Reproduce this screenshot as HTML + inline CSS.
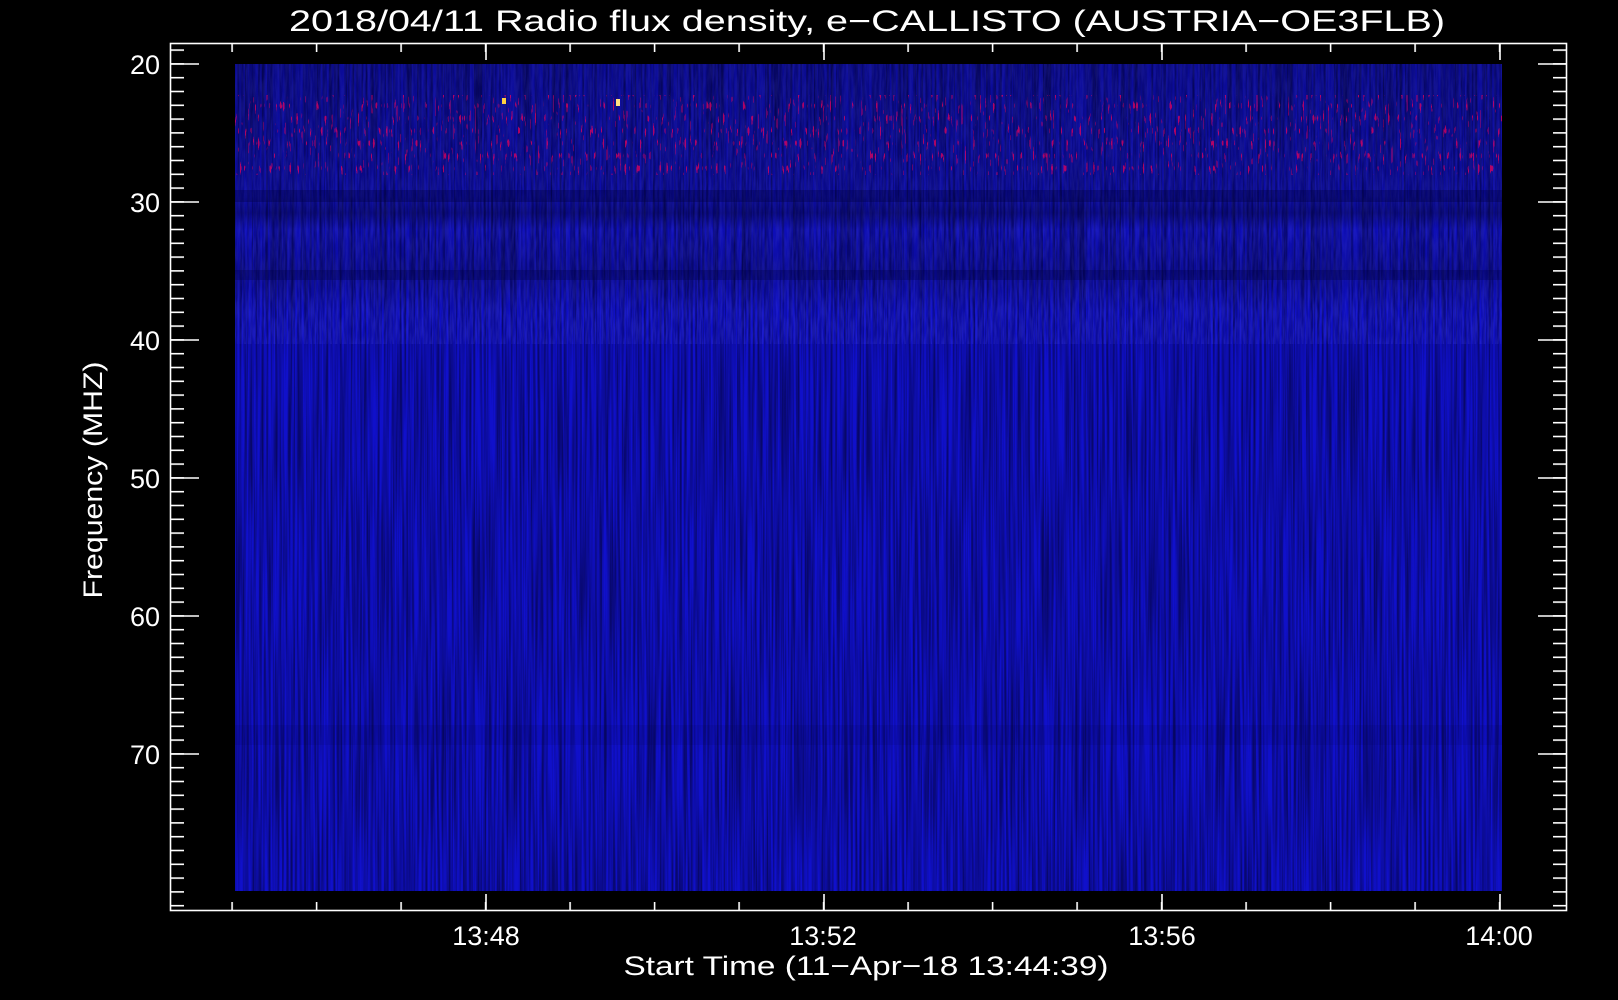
<!DOCTYPE html>
<html><head><meta charset="utf-8"><style>
html,body{margin:0;padding:0;background:#000;width:1618px;height:1000px;overflow:hidden}
svg{display:block}
text{font-family:"Liberation Sans",sans-serif;fill:#fff}
</style></head><body>
<svg width="1618" height="1000" viewBox="0 0 1618 1000" xmlns="http://www.w3.org/2000/svg">
<defs>
<filter id="noise" x="0" y="0" width="100%" height="100%">
<feTurbulence type="fractalNoise" baseFrequency="0.45 0.006" numOctaves="2" seed="3"/>
<feColorMatrix type="matrix" values="0 0 0 0 0  0 0 0 0 0  0 0 0 0 0  0 0 0 -2.2 1.5"/>
</filter>
<filter id="noise2" x="0" y="0" width="100%" height="100%">
<feTurbulence type="fractalNoise" baseFrequency="0.5 0.05" numOctaves="2" seed="7"/>
<feColorMatrix type="matrix" values="0 0 0 0 0.1  0 0 0 0 0.1  0 0 0 0 1  0 0 0 -3 2.0"/>
</filter>
<filter id="red" x="0" y="0" width="100%" height="100%">
<feTurbulence type="fractalNoise" baseFrequency="0.6 0.08" numOctaves="1" seed="11"/>
<feColorMatrix type="matrix" values="0 0 0 0 0.9  0 0 0 0 0  0 0 0 0 0.1  0 0 0 -30 10.2"/>
</filter>
<linearGradient id="bands" x1="0" y1="0" x2="0" y2="1">
<stop offset="0" stop-color="#000030" stop-opacity="0.4"/>
<stop offset="0.16" stop-color="#000030" stop-opacity="0.3"/>
<stop offset="0.18" stop-color="#000030" stop-opacity="0.5"/>
<stop offset="0.2" stop-color="#000030" stop-opacity="0.2"/>
<stop offset="0.25" stop-color="#000030" stop-opacity="0.35"/>
<stop offset="0.3" stop-color="#000030" stop-opacity="0.1"/>
<stop offset="1" stop-color="#000030" stop-opacity="0.1"/>
</linearGradient>
<pattern id="ymin" x="0" y="49.3" width="20" height="13.8" patternUnits="userSpaceOnUse"><rect x="0" y="0" width="20" height="1.6" fill="#fff"/></pattern>
<pattern id="xmin" x="231.3" y="0" width="84.5" height="20" patternUnits="userSpaceOnUse"><rect x="0" y="0" width="1.6" height="20" fill="#fff"/></pattern>
</defs>

<text x="867" y="31" font-size="30" text-anchor="middle" textLength="1156" lengthAdjust="spacingAndGlyphs">2018/04/11  Radio flux density, e−CALLISTO (AUSTRIA−OE3FLB)</text>

<rect x="235" y="64" width="1267" height="827" fill="#1212dc"/>
<rect x="235" y="64" width="1267" height="827" filter="url(#noise)" opacity="0.5"/>
<rect x="235" y="64" width="1267" height="280" filter="url(#noise2)" opacity="0.2"/>
<rect x="235" y="64" width="1267" height="827" fill="url(#bands)"/>
<rect x="235" y="190" width="1267" height="12" fill="#000040" opacity="0.35"/>
<rect x="235" y="270" width="1267" height="10" fill="#000040" opacity="0.3"/>
<rect x="235" y="725" width="1267" height="20" fill="#000040" opacity="0.1"/>
<rect x="235" y="95" width="1267" height="80" filter="url(#red)" opacity="0.7"/>
<rect x="502" y="98" width="4" height="6" fill="#ffd040"/>
<rect x="616" y="99" width="4" height="7" fill="#ffe080"/>

<rect x="170.5" y="43.5" width="1396" height="867" fill="none" stroke="#fff" stroke-width="1.6"/>
<rect x="170" y="49" width="14" height="862" fill="url(#ymin)"/>
<rect x="1553" y="49" width="14" height="862" fill="url(#ymin)"/>
<rect x="231" y="43" width="1272" height="9" fill="url(#xmin)"/>
<rect x="231" y="902" width="1272" height="9" fill="url(#xmin)"/>
<g stroke="#fff" stroke-width="1.6">
<path d="M170 64h29M170 202h29M170 340h29M170 478h29M170 616h29M170 754h29"/>
<path d="M1567 64h-29M1567 202h-29M1567 340h-29M1567 478h-29M1567 616h-29M1567 754h-29"/>
<path d="M486 911v-17M824 911v-17M1162 911v-17M1500 911v-17"/>
<path d="M486 43v17M824 43v17M1162 43v17M1500 43v17"/>
</g>

<g font-size="27" text-anchor="end">
<text x="160" y="74">20</text>
<text x="160" y="212">30</text>
<text x="160" y="350">40</text>
<text x="160" y="488">50</text>
<text x="160" y="626">60</text>
<text x="160" y="764">70</text>
</g>
<g font-size="27" text-anchor="middle">
<text x="486" y="945">13:48</text>
<text x="823" y="945">13:52</text>
<text x="1162" y="945">13:56</text>
<text x="1499" y="945">14:00</text>
<text x="866" y="975" textLength="485" lengthAdjust="spacingAndGlyphs">Start Time (11−Apr−18 13:44:39)</text>
<text transform="translate(102,480) rotate(-90)" textLength="237" lengthAdjust="spacingAndGlyphs">Frequency (MHZ)</text>
</g>
</svg>
</body></html>
